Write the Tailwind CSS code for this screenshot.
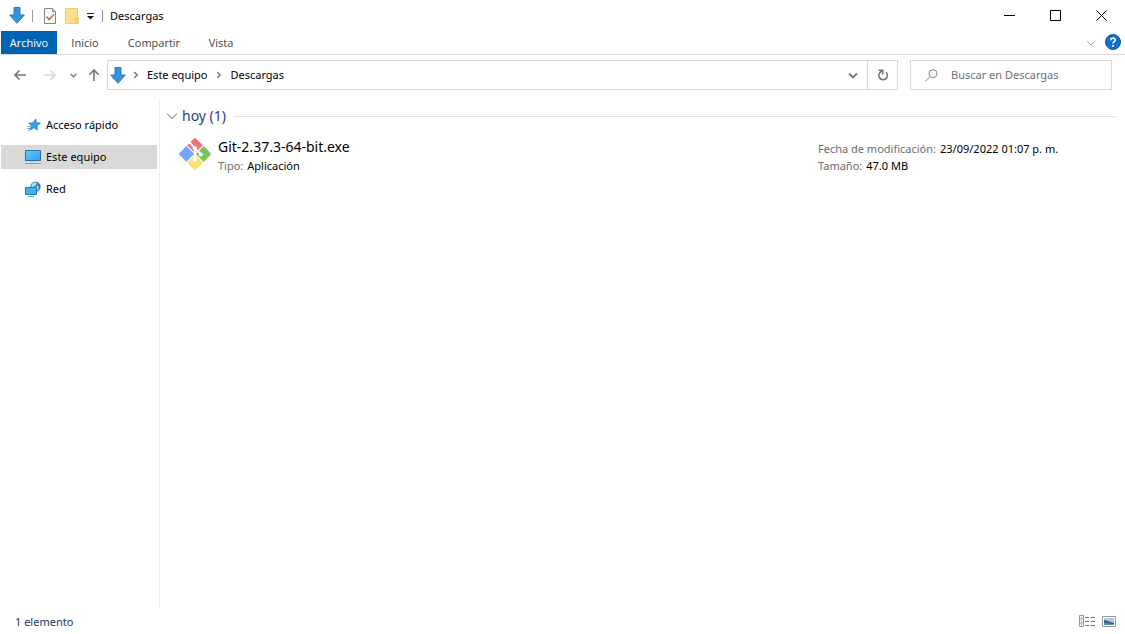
<!DOCTYPE html>
<html lang="es">
<head>
<meta charset="utf-8">
<meta name="viewport" content="width=device-width, initial-scale=1">
<title>Descargas</title>
<script src="https://cdn.jsdelivr.net/npm/@tailwindcss/browser@4"></script>
</head>
<body class="flex min-h-screen flex-col bg-white font-['Noto_Sans','Open_Sans',sans-serif] text-[11px] leading-4 text-black">
<svg class="hidden" aria-hidden="true">
  <symbol id="down" viewBox="0 0 16 17"><path d="M5 .5h6V8h4.3L8 16.3.7 8H5z" fill="#3494dc" stroke="#2b7cb9"/></symbol>
  <symbol id="chev" viewBox="0 0 12 12"><path d="M1 3.500l5 5 5-5" fill="none" stroke="currentColor"/></symbol>
  <symbol id="crumb" viewBox="0 0 6 8"><path d="M1.200 1l3 3-3 3" fill="none" stroke="#777" stroke-width="1.400"/></symbol>
</svg>

<header>
  <div class="flex h-[31px] items-center pr-px pl-[9px]">
    <svg class="h-[17px] w-4"><use href="#down"/></svg>
    <span class="ml-[7px] h-3 w-px bg-[#999]"></span>
    <button class="ml-[10px]" aria-label="Propiedades">
      <svg class="block h-4 w-[14px]" viewBox="0 0 14 16"><path d="M1.500.500h8l3 3v12h-11z" fill="#fbfbfb" stroke="#858585"/><path d="M9.500.500v3h3" fill="#ddd" stroke="#858585"/><path d="M3.500 8.500l2.500 3 5-5" fill="none" stroke="#dc6c44" stroke-width="1.700"/></svg>
    </button>
    <button class="ml-2" aria-label="Nueva carpeta">
      <svg class="block h-4 w-[14px]" viewBox="0 0 14 16"><path d="M.5.500h12v10h1v5H.5z" fill="#fce08c" stroke="#f0cd6c"/><path d="M11 15v-4.500h2.500" fill="none" stroke="#d9b658"/></svg>
    </button>
    <button class="ml-[7px]" aria-label="Personalizar barra de acceso rápido">
      <svg class="block h-2 w-[9px]" viewBox="0 0 9 8"><path d="M1 1.500h7" stroke="#222"/><path d="M1 4h7L4.500 7.500z" fill="#111"/></svg>
    </button>
    <span class="ml-[7px] h-3 w-px bg-[#999]"></span>
    <h1 class="ml-[7px]">Descargas</h1>
    <div class="ml-auto flex h-full">
      <button class="grid w-[46px] place-items-center" aria-label="Minimizar"><svg class="size-[11px]" viewBox="0 0 11 11"><path d="M0 5.500h11" stroke="#000"/></svg></button>
      <button class="grid w-[46px] place-items-center" aria-label="Maximizar"><svg class="size-[11px]" viewBox="0 0 11 11"><path d="M.5.500h10v10H.5z" fill="none" stroke="#000"/></svg></button>
      <button class="grid w-[46px] place-items-center" aria-label="Cerrar"><svg class="size-[11px]" viewBox="0 0 11 11"><path d="M.5.500l10 10M10.500.500l-10 10" stroke="#000"/></svg></button>
    </div>
  </div>
  <nav class="flex h-6 items-stretch border-b border-[#dadbdc] pl-px font-['Open_Sans','Noto_Sans',sans-serif] text-[#444]" aria-label="Cinta">
    <button class="w-14 bg-[#0063b1] text-white">Archivo</button>
    <button class="w-14">Inicio</button>
    <button class="ml-[6px] w-[70px]">Compartir</button>
    <button class="ml-[6px] w-[52px]">Vista</button>
    <button class="ml-auto text-[#999]" aria-label="Expandir la cinta"><svg class="size-[10px]"><use href="#chev"/></svg></button>
    <button class="mr-1 ml-[9px] self-start pt-[3px]" aria-label="Ayuda">
      <svg class="block size-4" viewBox="0 0 16 16"><circle cx="8" cy="8" r="7.500" fill="#0f6fcb" stroke="#0a56a4"/><path d="M5.800 6.200C5.900 3.500 10.300 3.600 10.200 6.100 10.100 7.700 8 7.700 8 9.600M8 11v1.800" fill="none" stroke="#fff" stroke-width="1.700"/></svg>
    </button>
  </nav>
  <div class="flex items-center py-[5px] pr-[13px] pl-[14px] text-[#666]">
    <button aria-label="Atrás"><svg class="block size-3" viewBox="0 0 12 12"><path d="M12 6H1M5.500 1.500L1 6l4.500 4.500" fill="none" stroke="#777" stroke-width="1.600"/></svg></button>
    <button class="ml-[18px]" aria-label="Adelante" disabled><svg class="block size-3" viewBox="0 0 12 12"><path d="M0 6h11M6.500 1.500L11 6l-4.500 4.500" fill="none" stroke="#d9d9d9" stroke-width="1.600"/></svg></button>
    <button class="ml-[14px]" aria-label="Ubicaciones recientes"><svg class="block size-[7px]" viewBox="0 0 7 7"><path d="M.7 2l2.800 2.800L6.300 2" fill="none" stroke="#777" stroke-width="1.500"/></svg></button>
    <button class="ml-[11px]" aria-label="Subir"><svg class="block size-3" viewBox="0 0 12 12"><path d="M6 12V1M1.300 5.700L6 1l4.700 4.700" fill="none" stroke="#777" stroke-width="1.600"/></svg></button>
    <div class="ml-[7px] flex h-[30px] flex-1 items-center border border-[#d9d9d9] pl-[2px] text-black">
      <svg class="h-[17px] w-4"><use href="#down"/></svg>
      <svg class="ml-[7px] h-2 w-[6px]"><use href="#crumb"/></svg>
      <a href="#equipo" class="ml-2">Este equipo</a>
      <svg class="ml-[9px] h-2 w-[6px]"><use href="#crumb"/></svg>
      <a href="#descargas" class="ml-2">Descargas</a>
      <button class="mr-[9px] ml-auto" aria-label="Ubicaciones anteriores"><svg class="block size-[10px]" viewBox="0 0 10 10"><path d="M1 3.500l4 4 4-4" fill="none" stroke="#777" stroke-width="1.800"/></svg></button>
      <button class="grid h-full w-[30px] place-items-center border-l border-[#d9d9d9]" aria-label="Actualizar"><svg class="size-3" viewBox="0 0 12 12"><path d="M9 3.300A4.200 4.200 0 1 1 2.700 4L5 1.700" fill="none" stroke="#777" stroke-width="1.700"/><path d="M1.500 1.200h4.300v4.300" fill="none" stroke="#777" stroke-width="1.500"/></svg></button>
    </div>
    <label class="ml-3 flex h-[30px] w-[202px] items-center border border-[#d9d9d9] pl-[14px]">
      <svg class="size-[13px] shrink-0" viewBox="0 0 13 13"><circle cx="8" cy="4.700" r="4" fill="none" stroke="#888"/><path d="M5 7.500L.5 12.300" stroke="#888"/></svg>
      <input type="search" aria-label="Buscar en Descargas" placeholder="Buscar en Descargas" class="ml-[13px] w-full min-w-0 bg-transparent outline-none placeholder:text-[#707070]">
    </label>
  </div>
</header>

<div class="flex flex-1 pt-1">
  <aside class="w-40 shrink-0 border-r border-[#f0f0f0] pt-[14px] pr-[2px] pl-px">
    <ul class="flex flex-col gap-2">
      <li><a href="#rapido" class="flex h-6 items-center gap-[5px] pl-6">
        <svg class="size-4" viewBox="0 0 16 16"><path d="M10.800 2l.6 3.800 4.100.3-3.500 2.400.3 4.700-3.300-2.500-4.200 2.400 1.700-4.200-2.700-2.800 4-.2z" fill="#2f9fe6" stroke="#1e7cc0" stroke-width=".8"/><path d="M2.500 9.500H5M2 11.500h3M3 13.500h1.500" stroke="#62b5ea"/></svg>Acceso rápido</a></li>
      <li><a href="#equipo" class="flex h-6 items-center gap-[5px] bg-[#d9d9d9] pl-6" aria-current="page">
        <svg class="size-4" viewBox="0 0 16 16"><defs><linearGradient id="scr" x2="1" y2="1"><stop stop-color="#68cdfb"/><stop offset="1" stop-color="#2a9eee"/></linearGradient></defs><path d="M.5 1.500h15v10H.5z" fill="url(#scr)" stroke="#2b6f9d"/><path d="M0 14.500h16" stroke="#8a9aa8"/><path d="M5 12.500h6" stroke="#b8c5cc"/></svg>Este equipo</a></li>
      <li><a href="#red" class="flex h-6 items-center gap-[5px] pl-6">
        <svg class="size-4" viewBox="0 0 16 16"><circle cx="10.500" cy="5.800" r="5.200" fill="#4a93bf"/><path d="M6.500 4q1.500-3 4-2.500t-.5 3-3 2zM10.500 6.500q2-2.500 3-1t-1.500 4z" fill="#b5dff3"/><path d="M12 1.500q3.500 2.500 2.500 6.500" stroke="#3b6988" fill="none"/><path d="M.5 6.500h11v7H.5z" fill="#43b2f4" stroke="#2475a9"/><path d="M3 15.500h6" stroke="#6ca6c9"/></svg>Red</a></li>
    </ul>
  </aside>
  <main class="min-w-0 flex-1 pt-[5px] pr-2 pl-[6px]">
    <h2 class="flex h-6 items-center text-sm text-[#2c3a84]">
      <svg class="mr-1 size-3 text-[#666]"><use href="#chev"/></svg>hoy (1)<span class="ml-2 h-px flex-1 bg-[#e2e2e2]"></span>
    </h2>
    <div class="flex items-start pt-2 pl-3">
      <svg class="mt-px size-[34px] shrink-0" viewBox="0 0 32 32">
        <defs><clipPath id="dia"><rect x="5" y="5" width="22" height="22" rx="1.500" transform="rotate(45 16 16)"/></clipPath></defs>
        <g clip-path="url(#dia)"><path d="M16 0l8 8-8 8-8-8z" fill="#ef757b"/><path d="M24 8l8 8-8 8-8-8z" fill="#78c65b"/><path d="M16 16l8 8-8 8-8-8z" fill="#ffdf78"/><path d="M8 8l8 8-8 8-8-8z" fill="#74a7f8"/></g>
        <path d="M7 7l18 18M25 7L7 25" stroke="#fff" stroke-width="1"/>
        <path d="M11 5l5 6v11M16 11l6 5.500" fill="none" stroke="#fff" stroke-width="1.800"/>
        <circle cx="16" cy="10.500" r="1.900" fill="#fff"/><circle cx="21.500" cy="16.500" r="1.900" fill="#fff"/><circle cx="16" cy="21.500" r="1.900" fill="#fff"/>
      </svg>
      <div class="ml-[6px] min-w-0 flex-1 pt-px">
        <a href="#git" class="block text-sm leading-5">Git-2.37.3-64-bit.exe</a>
        <p class="flex gap-1 leading-[18px]"><span class="text-[#6d6d6d]">Tipo:</span> Aplicación</p>
      </div>
      <div class="w-[299px] pt-1 leading-[17px]">
        <p class="flex gap-1"><span class="text-[#6d6d6d]">Fecha de modificación:</span> 23/09/2022 01:07 p. m.</p>
        <p class="flex gap-1"><span class="text-[#6d6d6d]">Tamaño:</span> 47.0 MB</p>
      </div>
    </div>
  </main>
</div>

<footer class="flex h-[26px] items-center pr-[9px] pl-[15px] text-[#1e395b]">
  <span class="pt-[2px]">1 elemento</span>
  <button class="ml-auto" aria-label="Detalles"><svg class="block h-3 w-[17px]" viewBox="0 0 17 12"><path d="M.5.500h4v11h-4zM.5 4h4M.5 8h4" fill="#fff" stroke="#999"/><path d="M2 2.300h1M2 6h1M2 9.800h1M6 2.500h4m1.500 0H16M6 6.500h4m1.500 0H16M6 10.500h4m1.500 0H16" stroke="#777"/></svg></button>
  <button class="ml-[6px]" aria-label="Iconos grandes"><svg class="block h-[11px] w-[14px]" viewBox="0 0 14 11"><path d="M.5.500h13v10H.5z" fill="#fff" stroke="#999"/><path d="M2 2h10v7H2z" fill="#a5d0e8"/><path d="M2 4l4 1 6 2v2H2z" fill="#38647c"/><path d="M2 7l10 1v1H2z" fill="#4a9cc5"/></svg></button>
</footer>
</body>
</html>
